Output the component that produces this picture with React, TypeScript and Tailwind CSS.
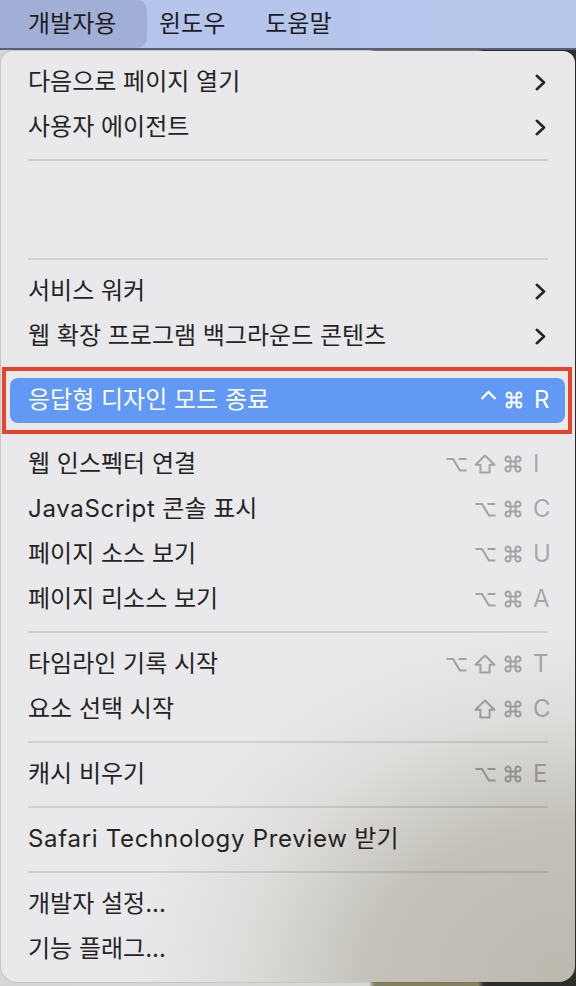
import React from 'react';

type Mod = 'opt' | 'shift' | 'cmd' | 'ctrl';

type Entry =
  | { type: 'row'; label: string; sub?: boolean; mods?: Mod[]; letter?: string }
  | { type: 'sep' }
  | { type: 'blank' }
  | { type: 'active'; label: string; mods: Mod[]; letter: string };

const entries: Entry[] = [
  { type: 'row', label: '다음으로 페이지 열기', sub: true },
  { type: 'row', label: '사용자 에이전트', sub: true },
  { type: 'sep' },
  { type: 'blank' },
  { type: 'sep' },
  { type: 'row', label: '서비스 워커', sub: true },
  { type: 'row', label: '웹 확장 프로그램 백그라운드 콘텐츠', sub: true },
  { type: 'active', label: '응답형 디자인 모드 종료', mods: ['ctrl', 'cmd'], letter: 'R' },
  { type: 'row', label: '웹 인스펙터 연결', mods: ['opt', 'shift', 'cmd'], letter: 'I' },
  { type: 'row', label: 'JavaScript 콘솔 표시', mods: ['opt', 'cmd'], letter: 'C' },
  { type: 'row', label: '페이지 소스 보기', mods: ['opt', 'cmd'], letter: 'U' },
  { type: 'row', label: '페이지 리소스 보기', mods: ['opt', 'cmd'], letter: 'A' },
  { type: 'sep' },
  { type: 'row', label: '타임라인 기록 시작', mods: ['opt', 'shift', 'cmd'], letter: 'T' },
  { type: 'row', label: '요소 선택 시작', mods: ['shift', 'cmd'], letter: 'C' },
  { type: 'sep' },
  { type: 'row', label: '캐시 비우기', mods: ['opt', 'cmd'], letter: 'E' },
  { type: 'sep' },
  { type: 'row', label: 'Safari Technology Preview 받기' },
  { type: 'sep' },
  { type: 'row', label: '개발자 설정...' },
  { type: 'row', label: '기능 플래그...' },
];

function ModIcon({ mod }: { mod: Mod }) {
  if (mod === 'opt') {
    return (
      <svg width="21" height="15" viewBox="0 0 21 15" fill="none" stroke="currentColor" strokeWidth="2.1">
        <path d="M0.5 2H7L14 13.5H20.5M12.5 2H20.5" />
      </svg>
    );
  }
  if (mod === 'shift') {
    return (
      <svg width="22" height="20" viewBox="0 0 22 20" fill="none" stroke="currentColor" strokeWidth="2" strokeLinejoin="round">
        <path d="M11 1.5L20.5 10.8H15.6V18.5H6.4V10.8H1.5Z" />
      </svg>
    );
  }
  if (mod === 'ctrl') {
    return (
      <svg width="17" height="18" viewBox="0 0 17 18" fill="none" stroke="currentColor" strokeWidth="2.3" className="mb-[4px]">
        <path d="M1.5 10L8.5 3L15.5 10" />
      </svg>
    );
  }
  return (
    <svg width="20" height="20" viewBox="0 0 24 24" fill="none" stroke="currentColor" strokeWidth="2.3">
      <path d="M15 6v12a3 3 0 1 0 3-3H6a3 3 0 1 0 3 3V6a3 3 0 1 0-3 3h12a3 3 0 1 0-3-3" />
    </svg>
  );
}

function Shortcut({ mods, letter }: { mods: Mod[]; letter: string }) {
  return (
    <div className="flex items-center">
      <div className="flex items-center gap-[7px]">
        {mods.map((m) => (
          <ModIcon key={m} mod={m} />
        ))}
      </div>
      <span className="ml-[10px] w-[15px] text-left leading-none">{letter}</span>
    </div>
  );
}

function Chevron() {
  return (
    <svg width="11" height="17" viewBox="0 0 11 17" fill="none" stroke="currentColor" strokeWidth="2.6" strokeLinecap="round" strokeLinejoin="round" className="mr-[2px] text-[#262626]">
      <path d="M1.8 1.8L9 8.5L1.8 15.2" />
    </svg>
  );
}

// latin runs are set a touch wider, like the system font
function Label({ text }: { text: string }) {
  const parts = text.split(/([A-Za-z]+(?: [A-Za-z]+)*)/);
  return (
    <span>
      {parts.map((p, i) =>
        /[A-Za-z]/.test(p) ? (
          <span key={i} className="tracking-[0.7px]">
            {p}
          </span>
        ) : (
          <React.Fragment key={i}>{p}</React.Fragment>
        )
      )}
    </span>
  );
}

export default function App() {
  return (
    <div className="flex h-[986px] w-[576px] flex-col overflow-hidden bg-[image:linear-gradient(to_right,#d6d6d6_0%,#d8d8d6_64%,#858064_65%,#858064_83%,#2e2e2e_84%)] font-[Inter,'Noto_Sans_CJK_KR',sans-serif] text-[#242424]">
      {/* menu bar */}
      <div className="flex h-[50px] shrink-0 items-center border-b-2 border-[#586077] bg-[image:linear-gradient(to_right,#b4c3ea,#b8c7ec)] text-[24px] text-[#1d1d1f]">
        <div className="flex h-full w-[147px] items-center rounded-r-[10px] bg-[#a1afd6] pl-[28px]">개발자용</div>
        <div className="pl-[12px]">윈도우</div>
        <div className="pl-[40px]">도움말</div>
      </div>

      {/* dropdown */}
      <div className="ml-[1px] mt-[1px] w-[574px] rounded-[12px] rounded-b-[16px] bg-[#e9e9eb] bg-[image:radial-gradient(ellipse_78%_38%_at_100%_100%,#bcb9af_0%,#c3c1b9_45%,rgba(214,213,208,0.6)_75%,rgba(233,233,235,0)_100%)] pb-[10px] pt-[8.5px] text-[24px] shadow-[0_0_0_1px_rgba(0,0,0,0.08)]">
        {entries.map((e, i) => {
          if (e.type === 'sep') {
            return (
              <div key={i} className="flex h-[20px] items-center px-[27px]">
                <div className="h-[2px] w-full bg-black/10" />
              </div>
            );
          }
          if (e.type === 'blank') {
            return <div key={i} className="h-[79px]" />;
          }
          if (e.type === 'active') {
            return (
              <div key={i} className="my-[8px] ml-[1px] mr-[3px] border-4 border-[#e5432b] py-[7px] pl-[4px] pr-[3px]">
                <div className="flex h-[45px] items-center justify-between rounded-[8px] bg-[#6199f5] pl-[18px] pr-[16px] text-white">
                  <Label text={e.label} />
                  <Shortcut mods={e.mods} letter={e.letter} />
                </div>
              </div>
            );
          }
          return (
            <div key={i} className="flex h-[45px] items-center justify-between px-[27px]">
              <Label text={e.label} />
              {e.sub && <Chevron />}
              {e.mods && e.letter && (
                <div className="text-black/30">
                  <Shortcut mods={e.mods} letter={e.letter} />
                </div>
              )}
            </div>
          );
        })}
      </div>
    </div>
  );
}
